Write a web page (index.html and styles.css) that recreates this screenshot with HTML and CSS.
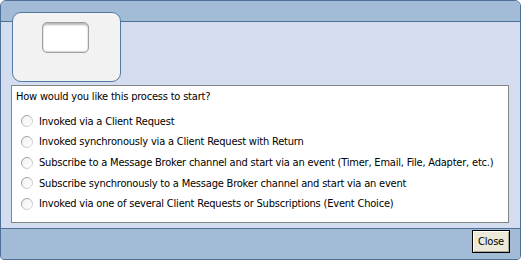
FILE: index.html
```html
<!DOCTYPE html>
<html>
<head>
<meta charset="utf-8">
<link rel="stylesheet" href="styles.css">
</head>
<body>
<div class="window">
  <div class="titlebar"></div>
  <div class="content">
    <div class="card"><div class="slot"></div></div>
    <div class="panel">
      <div class="question">How would you like this process to start?</div>
      <div class="options">
        <label class="option"><span class="radio"><svg viewBox="0 0 12 12" width="12" height="12"><defs><linearGradient id="g" x1="0" y1="0" x2="1" y2="1"><stop offset="0" stop-color="#8d8d8d"/><stop offset="1" stop-color="#e4e4e4"/></linearGradient><linearGradient id="f" x1="0" y1="0" x2="1" y2="1"><stop offset="0" stop-color="#f2f2f2"/><stop offset="1" stop-color="#ffffff"/></linearGradient></defs><circle cx="6" cy="6" r="5.5" fill="url(#f)" stroke="url(#g)"/></svg></span>Invoked via a Client Request</label>
        <label class="option"><span class="radio"><svg viewBox="0 0 12 12" width="12" height="12"><circle cx="6" cy="6" r="5.5" fill="url(#f)" stroke="url(#g)"/></svg></span>Invoked synchronously via a Client Request with Return</label>
        <label class="option"><span class="radio"><svg viewBox="0 0 12 12" width="12" height="12"><circle cx="6" cy="6" r="5.5" fill="url(#f)" stroke="url(#g)"/></svg></span>Subscribe to a Message Broker channel and start via an event (Timer, Email, File, Adapter, etc.)</label>
        <label class="option"><span class="radio"><svg viewBox="0 0 12 12" width="12" height="12"><circle cx="6" cy="6" r="5.5" fill="url(#f)" stroke="url(#g)"/></svg></span>Subscribe synchronously to a Message Broker channel and start via an event</label>
        <label class="option"><span class="radio"><svg viewBox="0 0 12 12" width="12" height="12"><circle cx="6" cy="6" r="5.5" fill="url(#f)" stroke="url(#g)"/></svg></span>Invoked via one of several Client Requests or Subscriptions (Event Choice)</label>
      </div>
    </div>
  </div>
  <div class="footer"><button class="close">Close</button></div>
</div>
</body>
</html>
```

FILE: styles.css
```css
html, body {
  margin: 0;
  padding: 0;
  background: #ffffff;
}
body {
  font-family: "DejaVu Sans Condensed", "DejaVu Sans", sans-serif;
  font-size: 11px;
  letter-spacing: -0.2px;
  color: #000;
}
.window {
  width: 519px;
  height: 258px;
  border: 1px solid #4f7096;
  border-radius: 6px 6px 4px 4px;
  overflow: hidden;
  display: flex;
  flex-direction: column;
  background: #d4ddef;
}
.titlebar {
  height: 20px;
  flex: none;
  background: #a2bbd6;
  border-bottom: 1px solid #4f7096;
}
.content {
  flex: none;
  height: 206px;
  background: #d4ddef;
  padding: 0 11px 0 10px;
  box-sizing: border-box;
}
.card {
  margin: -10px 0 0 1px;
  border: 1px solid #5379a3;
  border-radius: 9px;
  background: #f2f2f2;
  padding: 9px 0 0 29px;
  width: 78px;
  height: 59px;
}
.slot {
  width: 45px;
  height: 29px;
  border: 1px solid #a0a0a0;
  border-radius: 5px;
  background: #ffffff;
  box-shadow: inset 0 2px 2px #b8b8b8, inset 0 -1px 1px #d8d8d8;
}
.panel {
  margin-top: 3px;
  height: 136px;
  border: 1px solid #858585;
  background: #ffffff;
}
.question {
  padding: 4px 0 0 4px;
  line-height: 14px;
}
.options {
  margin-top: 7px;
  display: flex;
  flex-direction: column;
}
.option {
  height: 20.65px;
  display: flex;
  align-items: center;
  padding-left: 9px;
  white-space: nowrap;
}
.radio {
  width: 12px;
  height: 12px;
  margin-right: 6px;
  display: flex;
}
.footer {
  flex: 1;
  background: #a2bbd6;
  border-top: 1px solid #4f7096;
  display: flex;
  justify-content: flex-end;
  align-items: flex-start;
  padding: 1px 10px 0 0;
}
.close {
  width: 38px;
  height: 23px;
  padding: 0;
  margin: 0;
  border: 1px solid #000;
  background: #ece9d8;
  box-shadow: inset 1px 1px 0 #ffffff, inset -1px -1px 0 #aca899;
  font-family: "DejaVu Sans Condensed", "DejaVu Sans", sans-serif;
  font-size: 11px;
  letter-spacing: -0.2px;
  color: #000;
}
```
